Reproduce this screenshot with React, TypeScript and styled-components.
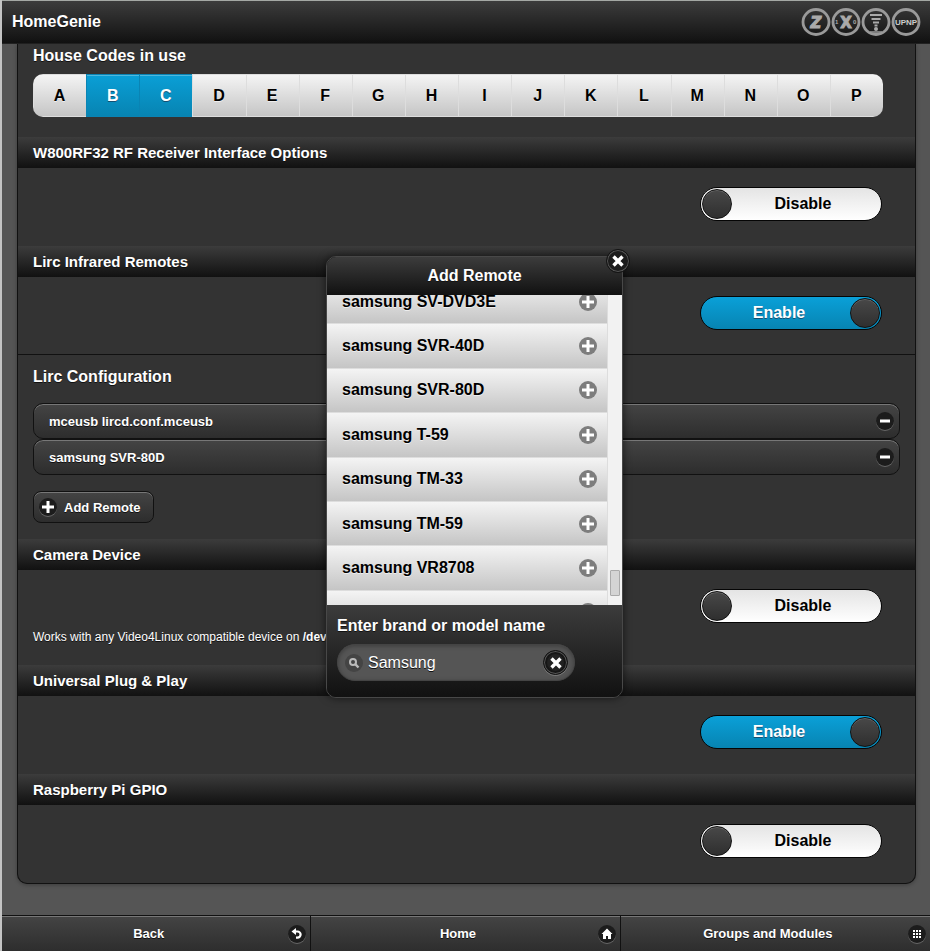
import React, { useState } from "react";
import styled, { createGlobalStyle, css } from "styled-components";

const GlobalStyle = createGlobalStyle`
  *, *::before, *::after { box-sizing: border-box; }
  body {
    margin: 0;
    background: #555;
    color: #fff;
    font-family: "Liberation Sans", Arial, Helvetica, sans-serif;
    font-size: 16px;
    text-shadow: 0 1px 0 #111;
  }
  button, input { font: inherit; }
  h1, h2, h3, p, ul { margin: 0; padding: 0; }
  ul { list-style: none; }
`;

const raised = css`
  border: 1px solid #111;
  background: linear-gradient(#444, #2d2d2d);
  box-shadow: inset 0 1px 0 #777;
`;

const Page = styled.div`
  position: relative;
  display: flex;
  flex-direction: column;
  min-height: 100vh;
  border-left: 2px solid #c4c4c4;
  overflow: hidden;
`;

const TopBar = styled.header`
  display: flex;
  align-items: center;
  justify-content: space-between;
  height: 44px;
  padding: 0 9px 0 10px;
  border-top: 1px solid #a4a8a4;
  border-bottom: 1px solid #222;
  background: linear-gradient(#3c3c3c, #111);
`;

const AppTitle = styled.h1`
  font-size: 16px;
  line-height: 20px;
`;

const StatusIcons = styled.div`
  display: flex;
`;

const StatusSvg = styled.svg`
  display: block;
  width: 30px;
  height: 28px;
  fill: #aaa;
  text-shadow: none;
  font-weight: bold;
`;

const Main = styled.main`
  flex: 1;
  padding: 0 14px 31px 15px;
`;

const Panel = styled.div`
  border: 1px solid #111;
  border-top: 0;
  border-radius: 0 0 10px 10px;
  background: #333;
  box-shadow: 0 1px 4px rgba(0, 0, 0, 0.3);
`;

const Divider = styled.h2`
  padding: 0 15px;
  font-size: 15px;
  line-height: 31px;
  background: linear-gradient(#3c3c3c, #111);
`;

const CodesSection = styled.section`
  padding: 2px 32px 20px 15px;
`;

const SubHeading = styled.h3`
  font-size: 16px;
  line-height: 20px;
`;

const CodeGroup = styled.div`
  display: flex;
  margin-top: 8px;
  border-radius: 10px;
  overflow: hidden;
`;

const CodeButton = styled.button<{ $on: boolean }>`
  flex: 1 1 0;
  min-width: 0;
  height: 43px;
  padding: 0 1px 0 0;
  border: 1px solid #ddd;
  border-width: 1px 0 1px 1px;
  font-weight: bold;
  color: #000;
  background: linear-gradient(#f4f4f4, #c5c5c5);
  text-shadow: 0 1px 0 #eee;
  cursor: pointer;
  ${(p) =>
    p.$on &&
    css`
      color: #fff;
      border-color: #0a84b4;
      background: linear-gradient(#0a9fd6, #0784b2);
      box-shadow: inset 0 1px 0 #4fb8de;
      text-shadow: 0 1px 0 #145072;
    `}
`;

const OptionBody = styled.section<{ $ruled?: boolean }>`
  padding: 19px 33px ${(p) => (p.$ruled ? 24 : 25)}px 15px;
  border-bottom: ${(p) => (p.$ruled ? "1px solid #111" : "0")};
`;

const ToggleLabel = styled.label<{ $on: boolean }>`
  display: flex;
  align-items: center;
  flex-direction: ${(p) => (p.$on ? "row-reverse" : "row")};
  width: 182px;
  height: 34px;
  margin-left: auto;
  padding: 0 1px;
  border: 1px solid #050505;
  border-radius: 17px;
  font-weight: bold;
  color: ${(p) => (p.$on ? "#fff" : "#000")};
  background: ${(p) =>
    p.$on ? "linear-gradient(#0aa0d8, #0784b2)" : "linear-gradient(#e4e4e4, #fff)"};
  text-shadow: ${(p) => (p.$on ? "0 1px 0 #145072" : "none")};
  cursor: pointer;
`;

const HiddenCheck = styled.input`
  position: absolute;
  width: 1px;
  height: 1px;
  margin: 0;
  opacity: 0;
`;

const Knob = styled.span`
  width: 30px;
  height: 30px;
  border: 1px solid #111;
  border-radius: 50%;
  background: linear-gradient(#484848, #2f2f2f);
  box-shadow: inset 0 1px 0 #666;
`;

const ToggleText = styled.span<{ $on: boolean }>`
  flex: 1;
  padding: ${(p) => (p.$on ? "0 0 0 6px" : "0 6px 0 0")};
  line-height: 20px;
  text-align: center;
`;

const Note = styled.p`
  margin-top: 5px;
  margin-bottom: -6px;
  font-size: 12px;
  line-height: 18px;
`;

const ConfigSection = styled.section`
  padding: 12px 15px 16px;
`;

const RemoteList = styled.ul`
  margin: 16px 0 16px;
`;

const RemoteRow = styled.li`
  ${raised}
  display: flex;
  align-items: center;
  justify-content: space-between;
  height: 36px;
  padding: 0 5px 0 15px;
  border-radius: 10px;
  font-size: 13px;
  font-weight: bold;
`;

const RoundButton = styled.button`
  display: flex;
  padding: 0;
  border: 0;
  background: none;
  color: inherit;
  cursor: pointer;
`;

const Disc = styled.span`
  display: flex;
  align-items: center;
  justify-content: center;
  flex: none;
  width: 18px;
  height: 18px;
  border-radius: 50%;
  color: #fff;
  background: #1c1c1c;
  box-shadow: 0 1px 0 #666;
`;

const LightDisc = styled(Disc)`
  background: #7d7d7d;
  box-shadow: none;
`;

const AddButton = styled.button`
  ${raised}
  display: flex;
  align-items: center;
  gap: 7px;
  height: 32px;
  padding: 0 12px 0 5px;
  border-radius: 8px;
  color: #fff;
  font-size: 13px;
  font-weight: bold;
  text-shadow: 0 1px 0 #111;
  cursor: pointer;
`;

const NavBar = styled.nav`
  display: grid;
  grid-template-columns: repeat(3, 1fr);
  height: 37px;
`;

const NavLink = styled.a`
  ${raised}
  display: flex;
  align-items: center;
  padding: 0 4px 0 7px;
  border-width: 1px 1px 0 0;
  color: #fff;
  font-size: 13px;
  font-weight: bold;
  text-decoration: none;

  &:last-child { border-right: 0; }
`;

const NavText = styled.span`
  flex: 1;
  padding-bottom: 2px;
  text-align: center;
`;

const Popup = styled.div`
  position: absolute;
  top: 256px;
  left: 324px;
  width: 297px;
  border: 1px solid #484848;
  border-radius: 10px;
  background: #111;
  box-shadow: 0 0 8px rgba(0, 0, 0, 0.6);
`;

const PopupTitle = styled.h2`
  height: 38px;
  border-radius: 9px 9px 0 0;
  font-size: 16px;
  line-height: 38px;
  text-align: center;
  background: linear-gradient(#3c3c3c, #111);
`;

const PopupClose = styled.button`
  position: absolute;
  top: -8px;
  right: -8px;
  display: flex;
  align-items: center;
  justify-content: center;
  width: 24px;
  height: 24px;
  padding: 0;
  border: 1px solid #141414;
  border-radius: 50%;
  color: #fff;
  background: #1c1c1c;
  box-shadow: inset 0 0 0 1px #555;
  cursor: pointer;
`;

const ResultPane = styled.div`
  display: flex;
  height: 310px;
  overflow: hidden;
`;

const ResultList = styled.ul`
  flex: 1;
  display: grid;
  grid-auto-rows: 1fr;
  height: 355px;
  margin-top: -16px;
`;

const ResultButton = styled.button`
  display: flex;
  align-items: center;
  justify-content: space-between;
  width: 100%;
  height: 100%;
  padding: 0 10px 0 15px;
  border: 0;
  border-top: 1px solid #ddd;
  color: #000;
  font-weight: bold;
  text-align: left;
  text-shadow: 0 1px 0 #eee;
  background: linear-gradient(#f4f4f4, #c5c5c5);
  cursor: pointer;
`;

const ScrollTrack = styled.div`
  flex: none;
  display: flex;
  flex-direction: column;
  justify-content: flex-end;
  width: 15px;
  padding: 0 2px 9px;
  border-left: 1px solid #ddd;
  background: #f2f2f2;
`;

const ScrollThumb = styled.div`
  height: 26px;
  border: 1px solid #aaa;
  border-radius: 1px;
  background: #d4d4d4;
`;

const SearchArea = styled.div`
  padding: 11px 10px 16px;
  border-radius: 0 0 9px 9px;
  background: linear-gradient(#3c3c3c, #111);
`;

const SearchLabel = styled.label`
  display: block;
  font-weight: bold;
  line-height: 20px;
`;

const SearchBox = styled.div`
  display: flex;
  align-items: center;
  gap: 5px;
  width: 238px;
  height: 37px;
  margin-top: 8px;
  padding: 0 6px 0 7px;
  border: 1px solid #444;
  border-radius: 18px;
  background: #555;
  box-shadow: inset 0 1px 4px rgba(0, 0, 0, 0.3);
`;

const SearchDisc = styled(Disc)`
  color: #bbb;
  background: #444;
  box-shadow: none;
`;

const SearchInput = styled.input`
  flex: 1;
  min-width: 0;
  padding: 0;
  border: 0;
  outline: 0;
  color: #fff;
  background: transparent;
  text-shadow: 0 1px 0 #111;
`;

const ClearButton = styled.button`
  display: flex;
  align-items: center;
  justify-content: center;
  flex: none;
  width: 25px;
  height: 25px;
  padding: 0;
  border: 1px solid #111;
  border-radius: 50%;
  color: #fff;
  background: #222;
  box-shadow: inset 0 0 0 1px #555, inset 0 0 0 3px #161616, 0 1px 0 #777;
  cursor: pointer;
`;

const GLYPHS = {
  plus: <path d="M7 1v12M1 7h12" stroke="currentColor" strokeWidth="3" />,
  minus: <path d="M2 7h10" stroke="currentColor" strokeWidth="3" />,
  cross: <path d="M2.500 2.500l9 9M11.500 2.500l-9 9" stroke="currentColor" strokeWidth="3.4" />,
  back: (
    <>
      <path d="M5 4.5h2.5a3 3 0 0 1 0 6.200H6" fill="none" stroke="currentColor" strokeWidth="2.2" />
      <path d="M1.5 4.5L6 1v7z" fill="currentColor" />
    </>
  ),
  home: <path d="M7 1.5L1.5 7H3v5h3V9h2v3h3V7h1.5z" fill="currentColor" />,
  grid: (
    <path
      d="M3 3h2v2H3zM6 3h2v2H6zM9 3h2v2H9zM3 6h2v2H3zM6 6h2v2H6zM9 6h2v2H9zM3 9h2v2H3zM6 9h2v2H6zM9 9h2v2H9z"
      fill="currentColor"
    />
  ),
  search: (
    <>
      <circle cx="6" cy="6" r="3" fill="none" stroke="currentColor" strokeWidth="2" />
      <path d="M8.2 8.2l3.3 3.3" stroke="currentColor" strokeWidth="2.4" />
    </>
  ),
};

function Glyph({ name }: { name: keyof typeof GLYPHS }) {
  return (
    <svg width="14" height="14" viewBox="0 0 14 14" aria-hidden="true">
      {GLYPHS[name]}
    </svg>
  );
}

function StatusIcon({ label, children }: { label: string; children: React.ReactNode }) {
  return (
    <StatusSvg viewBox="0 0 30 28" role="img" aria-label={label}>
      <ellipse cx="15" cy="14" rx="13" ry="12.5" fill="none" stroke="#9a9a9a" strokeWidth="2.8" />
      {children}
    </StatusSvg>
  );
}

function Toggle({ name, initial }: { name: string; initial: boolean }) {
  const [on, setOn] = useState(initial);
  return (
    <ToggleLabel $on={on}>
      <HiddenCheck
        type="checkbox"
        role="switch"
        aria-label={name}
        checked={on}
        onChange={(e) => setOn(e.target.checked)}
      />
      <Knob />
      <ToggleText $on={on}>{on ? "Enable" : "Disable"}</ToggleText>
    </ToggleLabel>
  );
}

const CODES = "ABCDEFGHIJKLMNOP".split("");
const REMOTES = ["mceusb lircd.conf.mceusb", "samsung SVR-80D"];
const RESULTS = ["SV-DVD3E", "SVR-40D", "SVR-80D", "T-59", "TM-33", "TM-59", "VR8708", "VXK-336"];

export default function App() {
  const [codes, setCodes] = useState(["B", "C"]);
  const [query, setQuery] = useState("Samsung");
  const flip = (c: string) =>
    setCodes((old) => (old.includes(c) ? old.filter((x) => x !== c) : [...old, c]));

  return (
    <Page>
      <GlobalStyle />
      <TopBar>
        <AppTitle>HomeGenie</AppTitle>
        <StatusIcons>
          <StatusIcon label="Z-Wave">
            <text x="15" y="19.5" textAnchor="middle" fontFamily="DejaVu Sans" fontStyle="italic" fontSize="15" stroke="#aaa" strokeWidth="1">Z</text>
          </StatusIcon>
          <StatusIcon label="X10">
            <text x="15" y="19.5" textAnchor="middle" fontFamily="DejaVu Sans" fontSize="15" stroke="#aaa" strokeWidth="1">X</text>
            <text x="4" y="16" fontSize="6">1</text>
            <text x="22" y="16" fontSize="6">0</text>
          </StatusIcon>
          <StatusIcon label="Infrared">
            <path d="M9 7h12M10.500 11h9M12 14.500h6M13.500 17.500h3" stroke="#aaa" strokeWidth="1.8" />
            <circle cx="15" cy="21" r="2" />
            <path d="M9 24h12" stroke="#9a9a9a" strokeWidth="1.5" />
          </StatusIcon>
          <StatusIcon label="UPnP">
            <text x="15" y="17" textAnchor="middle" fill="#ccc" fontSize="8">UPNP</text>
          </StatusIcon>
        </StatusIcons>
      </TopBar>

      <Main>
        <Panel>
          <CodesSection>
            <SubHeading>House Codes in use</SubHeading>
            <CodeGroup role="group" aria-label="House Codes in use">
              {CODES.map((c) => (
                <CodeButton
                  key={c}
                  type="button"
                  $on={codes.includes(c)}
                  aria-pressed={codes.includes(c)}
                  onClick={() => flip(c)}
                >
                  {c}
                </CodeButton>
              ))}
            </CodeGroup>
          </CodesSection>

          <Divider>W800RF32 RF Receiver Interface Options</Divider>
          <OptionBody>
            <Toggle name="W800RF32 RF Receiver" initial={false} />
          </OptionBody>

          <Divider>Lirc Infrared Remotes</Divider>
          <OptionBody $ruled>
            <Toggle name="Lirc Infrared Remotes" initial />
          </OptionBody>
          <ConfigSection>
            <SubHeading>Lirc Configuration</SubHeading>
            <RemoteList>
              {REMOTES.map((r) => (
                <RemoteRow key={r}>
                  {r}
                  <RoundButton type="button" aria-label={`Remove ${r}`}>
                    <Disc><Glyph name="minus" /></Disc>
                  </RoundButton>
                </RemoteRow>
              ))}
            </RemoteList>
            <AddButton type="button">
              <Disc><Glyph name="plus" /></Disc>
              Add Remote
            </AddButton>
          </ConfigSection>

          <Divider>Camera Device</Divider>
          <OptionBody>
            <Toggle name="Camera Device" initial={false} />
            <Note>
              Works with any Video4Linux compatible device on <b>/dev/video0</b>
            </Note>
          </OptionBody>

          <Divider>Universal Plug &amp; Play</Divider>
          <OptionBody>
            <Toggle name="Universal Plug & Play" initial />
          </OptionBody>

          <Divider>Raspberry Pi GPIO</Divider>
          <OptionBody>
            <Toggle name="Raspberry Pi GPIO" initial={false} />
          </OptionBody>
        </Panel>
      </Main>

      <NavBar>
        <NavLink href="#back">
          <NavText>Back</NavText>
          <Disc><Glyph name="back" /></Disc>
        </NavLink>
        <NavLink href="#home">
          <NavText>Home</NavText>
          <Disc><Glyph name="home" /></Disc>
        </NavLink>
        <NavLink href="#groups">
          <NavText>Groups and Modules</NavText>
          <Disc><Glyph name="grid" /></Disc>
        </NavLink>
      </NavBar>

      <Popup role="dialog" aria-label="Add Remote">
        <PopupTitle>Add Remote</PopupTitle>
        <ResultPane>
          <ResultList>
            {RESULTS.map((model) => (
              <li key={model}>
                <ResultButton type="button">
                  samsung {model}
                  <LightDisc><Glyph name="plus" /></LightDisc>
                </ResultButton>
              </li>
            ))}
          </ResultList>
          <ScrollTrack>
            <ScrollThumb />
          </ScrollTrack>
        </ResultPane>
        <SearchArea>
          <SearchLabel htmlFor="remote-search">Enter brand or model name</SearchLabel>
          <SearchBox>
            <SearchDisc><Glyph name="search" /></SearchDisc>
            <SearchInput
              id="remote-search"
              type="text"
              value={query}
              onChange={(e) => setQuery(e.target.value)}
            />
            <ClearButton type="button" aria-label="Clear text" onClick={() => setQuery("")}>
              <Glyph name="cross" />
            </ClearButton>
          </SearchBox>
        </SearchArea>
        <PopupClose type="button" aria-label="Close">
          <Glyph name="cross" />
        </PopupClose>
      </Popup>
    </Page>
  );
}
